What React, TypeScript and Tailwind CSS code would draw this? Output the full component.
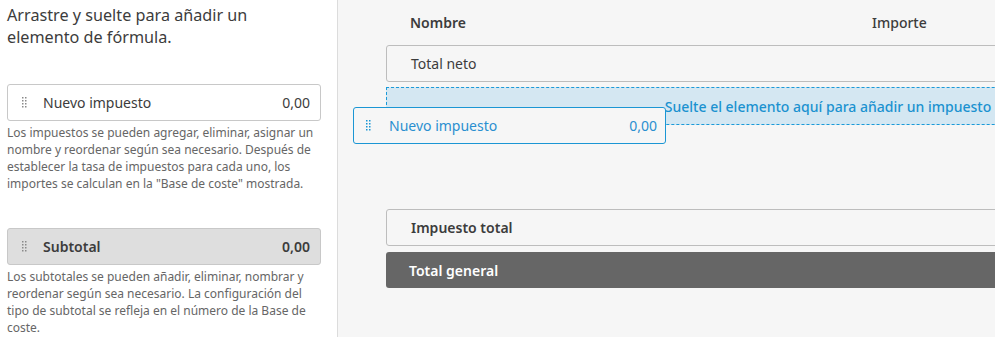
import React from "react";

const font = { fontFamily: "'Noto Sans', 'Open Sans', sans-serif" };

function Grip({ color }: { color: string }) {
  const dots = [];
  for (let r = 0; r < 4; r++) {
    for (let c = 0; c < 2; c++) {
      dots.push(<rect key={`${r}-${c}`} x={c * 3} y={r * 3} width={1.5} height={1.5} fill={color} />);
    }
  }
  return (
    <svg width="5" height="11" viewBox="0 0 5 11" className="shrink-0">
      {dots}
    </svg>
  );
}

export default function App() {
  return (
    <div className="w-[995px] h-[337px] overflow-hidden flex bg-white" style={font}>
      {/* Left panel */}
      <div className="w-[338px] shrink-0 h-full bg-white border-r border-[#dcdcdc] pl-[7px] pr-[16px] pt-[4px]">
        <div className="text-[16.2px] leading-[22px] text-[#3c3c3c]">
          Arrastre y suelte para añadir un<br />elemento de fórmula.
        </div>
        <div className="mt-[36px] h-[37px] border border-[#c8c8c8] rounded-[3px] bg-white flex items-center pl-[14px] pr-[10px]">
          <Grip color="#8a8a8a" />
          <span className="ml-[16px] text-[14px] text-[#3c3c3c]">Nuevo impuesto</span>
          <span className="ml-auto text-[14px] text-[#3c3c3c]">0,00</span>
        </div>
        <div className="mt-[3px] text-[12px] leading-[17px] text-[#666666]">
          Los impuestos se pueden agregar, eliminar, asignar un<br />
          nombre y reordenar según sea necesario. Después de<br />
          establecer la tasa de impuestos para cada uno, los<br />
          importes se calculan en la "Base de coste" mostrada.
        </div>
        <div className="mt-[36px] h-[37px] border border-[#c8c8c8] rounded-[3px] bg-[#dedede] flex items-center pl-[14px] pr-[10px]">
          <Grip color="#8a8a8a" />
          <span className="ml-[16px] text-[14px] font-semibold text-[#3c3c3c]">Subtotal</span>
          <span className="ml-auto text-[14px] font-semibold text-[#3c3c3c]">0,00</span>
        </div>
        <div className="mt-[3px] text-[12px] leading-[17px] text-[#666666]">
          Los subtotales se pueden añadir, eliminar, nombrar y<br />
          reordenar según sea necesario. La configuración del<br />
          tipo de subtotal se refleja en el número de la Base de<br />
          coste.
        </div>
      </div>

      {/* Right panel */}
      <div className="relative flex-1 h-full bg-[#f6f6f6] pl-[48px] pt-[12px]">
        <div className="w-[884px]">
          <div className="grid grid-cols-[486px_1fr] h-[20px] items-center text-[14px] text-[#3c3c3c]">
            <span className="pl-[24px] font-semibold">Nombre</span>
            <span className="font-medium">Importe</span>
          </div>
          <div className="mt-[13px] h-[37px] border border-[#bdbdbd] rounded-[3px] bg-[#f6f6f6] flex items-center pl-[24px] text-[14px] text-[#3c3c3c]">
            Total neto
          </div>
          <div className="mt-[5px] h-[38px] border border-dashed border-[#1b9ad8] bg-[#d4e7f2] flex items-center justify-center text-[14px] font-medium text-[#1b92d0]">
            Suelte el elemento aquí para añadir un impuesto
          </div>
          <div className="mt-[84px] h-[37px] border border-[#bdbdbd] rounded-[3px] bg-[#f6f6f6] flex items-center pl-[24px] text-[14px] font-semibold text-[#3c3c3c]">
            Impuesto total
          </div>
          <div className="mt-[6px] h-[36px] rounded-[3px] bg-[#666666] flex items-center pl-[23px] text-[14px] font-semibold text-white">
            Total general
          </div>
        </div>

        {/* Drag ghost */}
        <div className="absolute left-[15px] top-[107px] w-[313px] h-[37px] border border-[#1b96d4] rounded-[3px] bg-[#f6f6f6] flex items-center pl-[12px] pr-[8px]">
          <Grip color="#1b96d4" />
          <span className="ml-[18px] text-[14px] text-[#2a8fd0]">Nuevo impuesto</span>
          <span className="ml-auto text-[14px] text-[#2a8fd0]">0,00</span>
        </div>
      </div>
    </div>
  );
}
